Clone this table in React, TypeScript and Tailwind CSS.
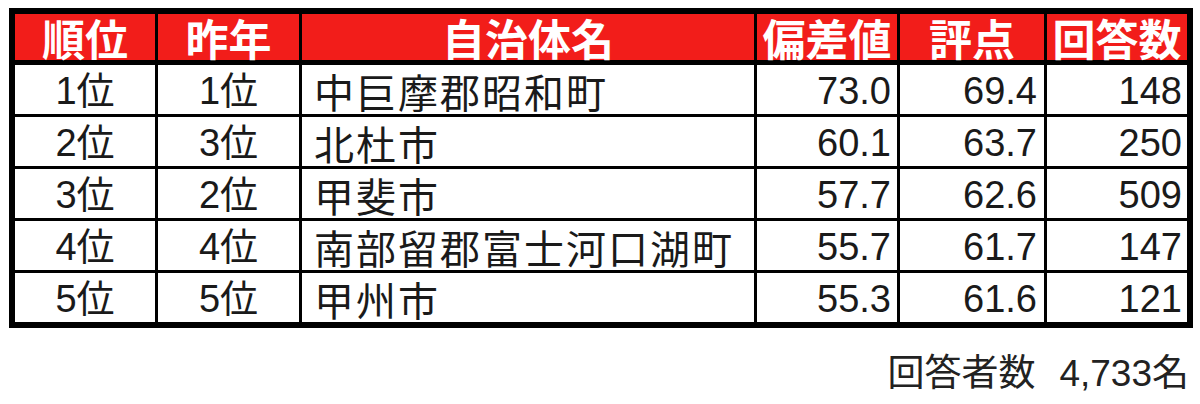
import React from 'react';

const rows = [
  { rank: '1位', prev: '1位', name: '中巨摩郡昭和町', dev: '73.0', score: '69.4', count: '148' },
  { rank: '2位', prev: '3位', name: '北杜市', dev: '60.1', score: '63.7', count: '250' },
  { rank: '3位', prev: '2位', name: '甲斐市', dev: '57.7', score: '62.6', count: '509' },
  { rank: '4位', prev: '4位', name: '南部留郡富士河口湖町', dev: '55.7', score: '61.7', count: '147' },
  { rank: '5位', prev: '5位', name: '甲州市', dev: '55.3', score: '61.6', count: '121' },
];

const cols = 'grid grid-cols-[140px_141px_452px_140px_144px_140px] gap-x-[3px]';
const font = { fontFamily: '"Liberation Sans", "Noto Sans CJK JP", sans-serif' };
const cjk = { fontFamily: '"Noto Sans CJK JP", sans-serif' };

export default function App() {
  return (
    <div className="w-[1200px] h-[404px] bg-white pt-[8px] pl-[9px]" style={font}>
      <div className="w-[1184px] bg-black p-[6px] flex flex-col gap-y-[3px]">
        <div className={`${cols} mb-[2px]`}>
          {['順位', '昨年', '自治体名', '偏差値', '評点', '回答数'].map((h) => (
            <div
              key={h}
              className="h-[46px] bg-[#f21d1a] text-white font-bold text-[43px] leading-none flex items-center justify-center"
              style={cjk}
            >
              {h}
            </div>
          ))}
        </div>
        {rows.map((r) => (
          <div key={r.rank} className={cols}>
            <div className="h-[49px] bg-white text-[38px] leading-none text-[#1a1a1a] flex items-center justify-center pt-[2px]">{r.rank}</div>
            <div className="h-[49px] bg-white text-[38px] leading-none text-[#1a1a1a] flex items-center justify-center pt-[2px]">{r.prev}</div>
            <div
              className="h-[49px] bg-white text-[40px] leading-none tracking-[2px] text-[#1a1a1a] flex items-center pl-[12px] pt-[2px]"
              style={cjk}
            >
              {r.name}
            </div>
            <div className="h-[49px] bg-white text-[38px] leading-none text-[#1a1a1a] flex items-center justify-end pr-[6px] pt-[2px]">{r.dev}</div>
            <div className="h-[49px] bg-white text-[38px] leading-none text-[#1a1a1a] flex items-center justify-end pr-[7px] pt-[2px]">{r.score}</div>
            <div className="h-[49px] bg-white text-[38px] leading-none text-[#1a1a1a] flex items-center justify-end pr-[5px] pt-[2px]">{r.count}</div>
          </div>
        ))}
      </div>
      <div className="w-[1180px] mt-[24px] flex justify-end items-baseline leading-none text-[#222]">
        <span className="text-[37px]" style={cjk}>回答者数</span>
        <span className="text-[37px] ml-[24px]">4,733</span>
        <span className="text-[37px]" style={cjk}>名</span>
      </div>
    </div>
  );
}
